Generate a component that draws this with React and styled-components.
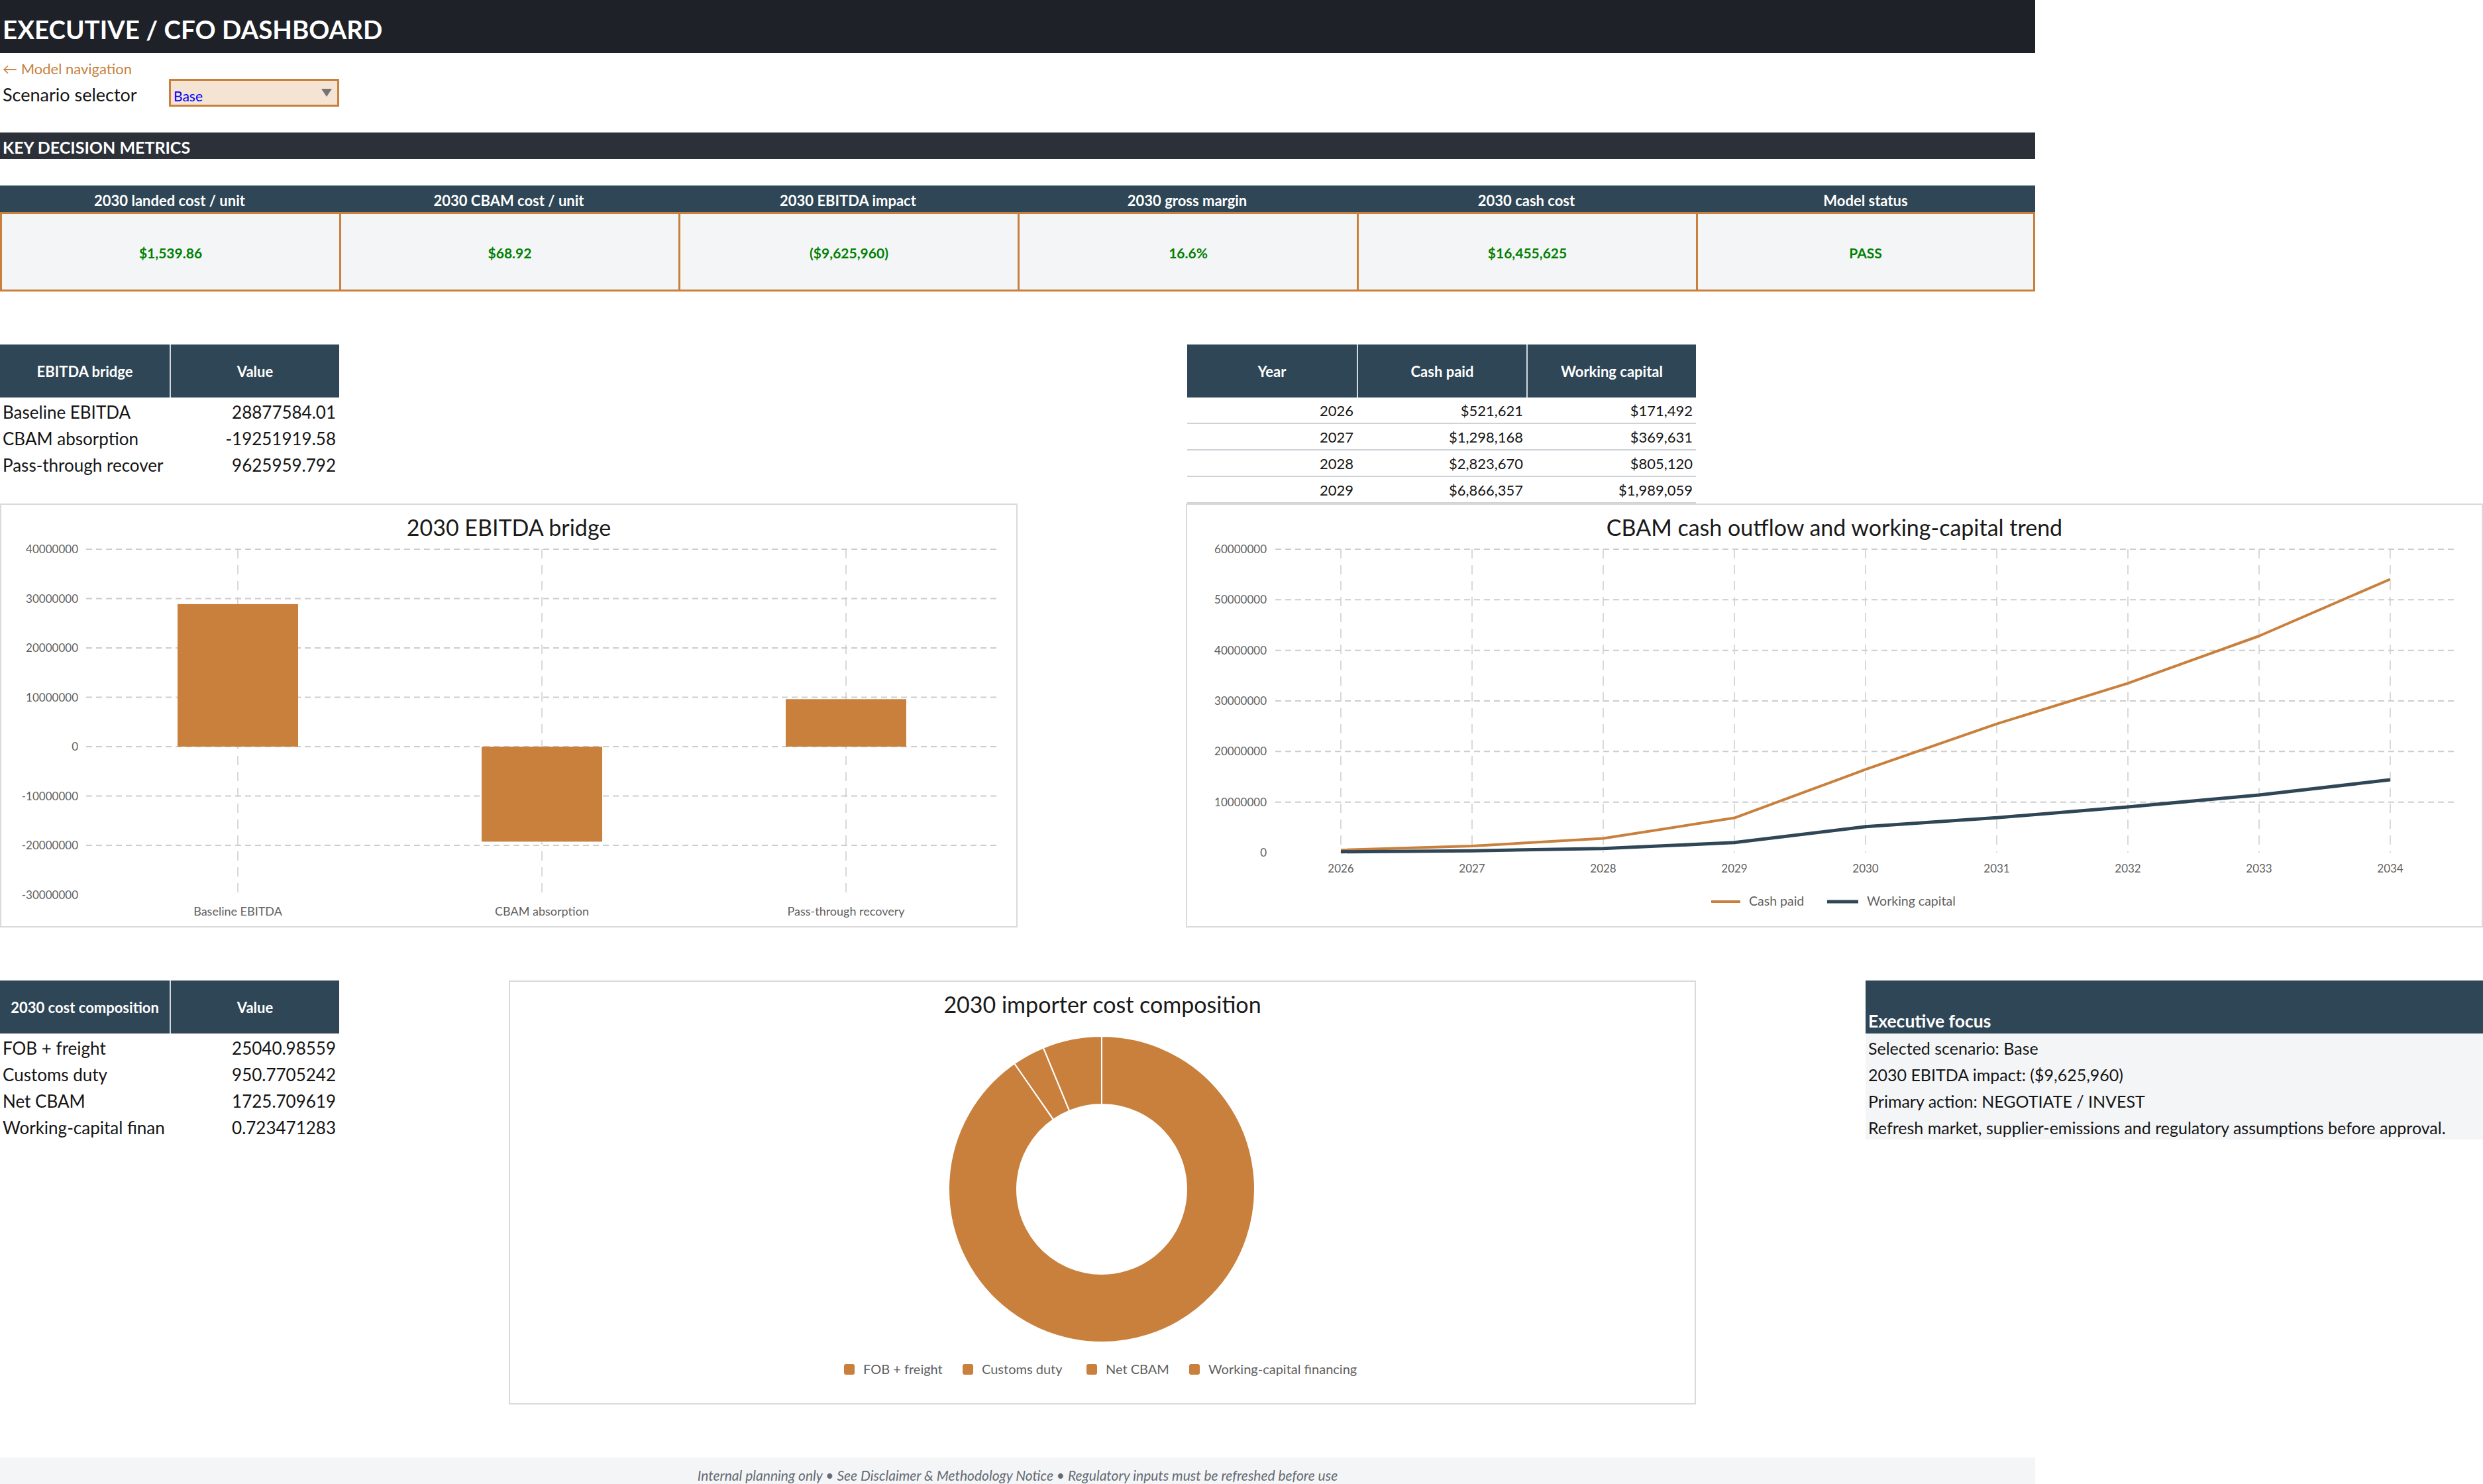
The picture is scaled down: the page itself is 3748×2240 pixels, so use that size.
import React from "react";
import styled, { createGlobalStyle } from "styled-components";

const ORANGE = "#c8803c";
const SLATE = "#2f4656";
const PANEL = "#f4f5f7";
const AXIS = "#5f5f5f";
const GRID = "#cdcdcd";

const GlobalStyle = createGlobalStyle`
  html, body {
    margin: 0;
    padding: 0;
    background: #ffffff;
  }
  body {
    width: 3748px;
    height: 2240px;
    overflow: hidden;
    font-family: Lato, "Noto Sans", sans-serif;
    color: #151515;
  }
`;

const metrics = [
  ["2030 landed cost / unit", "$1,539.86"],
  ["2030 CBAM cost / unit", "$68.92"],
  ["2030 EBITDA impact", "($9,625,960)"],
  ["2030 gross margin", "16.6%"],
  ["2030 cash cost", "$16,455,625"],
  ["Model status", "PASS"],
];

// labels are shown as the sheet cuts them at the column edge
const bridgeRows = [
  ["Baseline EBITDA", "28877584.01"],
  ["CBAM absorption", "-19251919.58"],
  ["Pass-through recover", "9625959.792"],
];

const yearRows = [
  ["2026", "$521,621", "$171,492"],
  ["2027", "$1,298,168", "$369,631"],
  ["2028", "$2,823,670", "$805,120"],
  ["2029", "$6,866,357", "$1,989,059"],
];

const costRows = [
  ["FOB + freight", "25040.98559"],
  ["Customs duty", "950.7705242"],
  ["Net CBAM", "1725.709619"],
  ["Working-capital finan", "0.723471283"],
];

const costLegend = ["FOB + freight", "Customs duty", "Net CBAM", "Working-capital financing"];

const focusLines = [
  "Selected scenario: Base",
  "2030 EBITDA impact: ($9,625,960)",
  "Primary action: NEGOTIATE / INVEST",
  "Refresh market, supplier-emissions and regulatory assumptions before approval.",
];

const years = [2026, 2027, 2028, 2029, 2030, 2031, 2032, 2033, 2034];
const cashPaid = [521621, 1298168, 2823670, 6866357, 16455625, 25460000, 33500000, 42840000, 54070000];
const workingCap = [171492, 369631, 805120, 1989059, 5130000, 6900000, 9040000, 11400000, 14400000];

/* ---------- page frame ---------- */

const Page = styled.div`
  width: 3748px;
  height: 2240px;
  display: flex;
  flex-direction: column;
`;

const TitleBar = styled.h1`
  margin: 0;
  width: 3072px;
  height: 80px;
  box-sizing: border-box;
  padding: 8px 4px 0;
  background: #1e2127;
  color: #ffffff;
  font-size: 38.5px;
  font-weight: 700;
  line-height: 72px;
  white-space: nowrap;
`;

const NavLink = styled.a`
  height: 40px;
  display: flex;
  align-items: flex-end;
  padding: 0 0 3px 4px;
  box-sizing: border-box;
  color: ${ORANGE};
  font-size: 22px;
  text-decoration: none;
`;

const ScenarioRow = styled.div`
  height: 40px;
  display: grid;
  grid-template-columns: 255px 257px;
`;

const ScenarioLabel = styled.div`
  font-size: 27px;
  line-height: 40px;
  padding-left: 4px;
  padding-top: 3px;
  box-sizing: border-box;
  white-space: nowrap;
`;

const Dropdown = styled.div`
  margin-top: -1px;
  height: 42px;
  box-sizing: border-box;
  border: 3px solid ${ORANGE};
  background: #f5e4d3;
  display: flex;
  align-items: center;
  justify-content: space-between;
  padding: 0 8px 0 4px;
`;

const DropdownValue = styled.span`
  margin-top: 8px;
  color: #0000ff;
  font-size: 21px;
  line-height: 1;
`;

const DropdownCaret = styled.span`
  width: 0;
  height: 0;
  border-left: 8px solid transparent;
  border-right: 8px solid transparent;
  border-top: 12px solid #747474;
`;

const Spacer = styled.div`
  height: ${(p) => p.$h}px;
  flex: none;
`;

const SectionBar = styled.h2`
  margin: 0;
  width: 3072px;
  height: 40px;
  box-sizing: border-box;
  padding: 4px 4px 0;
  background: #2b3039;
  color: #ffffff;
  font-size: 25px;
  font-weight: 700;
  line-height: 36px;
`;

/* ---------- KPI strip ---------- */

const KpiGrid = styled.div`
  width: 3072px;
  display: grid;
  grid-template-columns: repeat(6, 512px);
`;

const KpiHead = styled.div`
  height: 40px;
  box-sizing: border-box;
  background: ${SLATE};
  color: #ffffff;
  font-size: 22px;
  font-weight: 700;
  text-align: center;
  line-height: 40px;
  padding-top: 3px;
`;

const KpiValue = styled.div`
  height: 120px;
  box-sizing: border-box;
  background: ${PANEL};
  border-top: 3px solid ${ORANGE};
  border-bottom: 3px solid ${ORANGE};
  border-left: 3px solid ${ORANGE};
  border-right: ${(p) => (p.$last ? `3px solid ${ORANGE}` : "none")};
  color: #008000;
  font-size: 21px;
  font-weight: 700;
  display: flex;
  align-items: center;
  justify-content: center;
  padding-top: 2px;
`;

/* ---------- bands ---------- */

const Band = styled.div`
  height: ${(p) => p.$h}px;
  display: grid;
  grid-template-columns: ${(p) => p.$cols};
  align-items: start;
  flex: none;
`;

const Table = styled.div`
  display: grid;
  grid-template-columns: ${(p) => p.$cols};
  grid-column: ${(p) => p.$col || "auto"};
`;

const HeadCell = styled.div`
  height: 80px;
  box-sizing: border-box;
  background: ${SLATE};
  color: #ffffff;
  font-size: 22px;
  font-weight: 700;
  display: flex;
  align-items: center;
  justify-content: center;
  border-left: ${(p) => (p.$first ? "none" : "2px solid #d3d9de")};
  white-space: nowrap;
`;

const BodyCell = styled.div`
  height: 40px;
  box-sizing: border-box;
  padding: ${(p) => p.$shift}px 5px 0 4px;
  font-size: ${(p) => p.$size}px;
  line-height: 40px;
  text-align: ${(p) => p.$align};
  white-space: nowrap;
  color: #151515;
  border-bottom: ${(p) => (p.$ruled ? "2px solid #cfd3d8" : "none")};
`;

const ChartCard = styled.div`
  grid-column: ${(p) => p.$col || "auto"};
  width: ${(p) => p.$w}px;
  height: ${(p) => p.$h}px;
  box-sizing: border-box;
  border: 2px solid #dadada;
  background: #ffffff;
  svg {
    display: block;
  }
`;

const Focus = styled.div`
  grid-column: ${(p) => p.$col};
  display: flex;
  flex-direction: column;
`;

const FocusHead = styled.div`
  height: 80px;
  box-sizing: border-box;
  background: ${SLATE};
  color: #ffffff;
  font-size: 26.5px;
  font-weight: 700;
  display: flex;
  align-items: flex-end;
  padding: 0 0 3px 4px;
`;

const FocusLine = styled.div`
  height: 40px;
  box-sizing: border-box;
  background: ${PANEL};
  font-size: 25px;
  line-height: 40px;
  padding: 2px 0 0 4px;
  white-space: nowrap;
`;

const Footer = styled.footer`
  width: 3072px;
  height: 40px;
  box-sizing: border-box;
  padding-top: 5px;
  background: ${PANEL};
  color: #646b73;
  font-size: 21px;
  font-style: italic;
  text-align: center;
  line-height: 44px;
  flex: none;
  overflow: hidden;
`;

/* ---------- charts ---------- */

const txt = { fontFamily: "Lato, 'Noto Sans', sans-serif" };

function BridgeChart() {
  const zero = 367;
  const step = 74.5;
  const y = (v) => zero - (v / 1e7) * step;
  const ticks = [4e7, 3e7, 2e7, 1e7, 0, -1e7, -2e7, -3e7];
  const centers = [359, 818, 1277];
  const labels = ["Baseline EBITDA", "CBAM absorption", "Pass-through recovery"];
  const values = [28877584.01, -19251919.58, 9625959.792];
  return (
    <ChartCard $w={1536} $h={640}>
      <svg width={1532} height={636} viewBox="2 2 1532 636">
        <text x={768} y={49} textAnchor="middle" fontSize={34} fill="#1a1a1a" style={txt}>
          2030 EBITDA bridge
        </text>
        {ticks.map((t) => (
          <g key={t}>
            {t !== -3e7 && (
              <line x1={130} x2={1506} y1={y(t)} y2={y(t)} stroke={GRID} strokeWidth={2} strokeDasharray="9 6" />
            )}
            <text x={118} y={y(t) + 6} textAnchor="end" fontSize={17} fill={AXIS} style={txt}>
              {String(t)}
            </text>
          </g>
        ))}
        {centers.map((c, i) => (
          <g key={c}>
            <line x1={c} x2={c} y1={69} y2={591} stroke={GRID} strokeWidth={1.5} strokeDasharray="14 10" />
            <rect
              x={c - 91}
              width={182}
              y={Math.min(y(values[i]), zero)}
              height={Math.abs(y(values[i]) - zero)}
              fill={ORANGE}
            />
            <text x={c} y={622} textAnchor="middle" fontSize={18} fill={AXIS} style={txt}>
              {labels[i]}
            </text>
          </g>
        ))}
      </svg>
    </ChartCard>
  );
}

function TrendChart() {
  const y = (v) => 527 - (v / 1e7) * 76.33;
  const x = (i) => 234 + i * 198;
  const ticks = [6e7, 5e7, 4e7, 3e7, 2e7, 1e7, 0];
  const pts = (arr) => arr.map((v, i) => `${x(i)},${y(v)}`).join(" ");
  return (
    <ChartCard $w={1958} $h={640} $col={3}>
      <svg width={1954} height={636} viewBox="2 2 1954 636">
        <text x={979} y={49} textAnchor="middle" fontSize={34} fill="#1a1a1a" style={txt}>
          CBAM cash outflow and working-capital trend
        </text>
        {ticks.map((t) => (
          <g key={t}>
            {t !== 0 && (
              <line x1={135} x2={1917} y1={y(t)} y2={y(t)} stroke={GRID} strokeWidth={2} strokeDasharray="9 6" />
            )}
            <text x={122} y={y(t) + 6} textAnchor="end" fontSize={17} fill={AXIS} style={txt}>
              {String(t)}
            </text>
          </g>
        ))}
        {years.map((yr, i) => (
          <g key={yr}>
            <line x1={x(i)} x2={x(i)} y1={69} y2={527} stroke={GRID} strokeWidth={1.5} strokeDasharray="14 10" />
            <text x={x(i)} y={557} textAnchor="middle" fontSize={17} fill={AXIS} style={txt}>
              {yr}
            </text>
          </g>
        ))}
        <polyline points={pts(cashPaid)} fill="none" stroke={ORANGE} strokeWidth={4} strokeLinejoin="round" />
        <polyline points={pts(workingCap)} fill="none" stroke={SLATE} strokeWidth={5} strokeLinejoin="round" />
        <line x1={793} x2={837} y1={601} y2={601} stroke={ORANGE} strokeWidth={4} />
        <text x={850} y={607} fontSize={19.5} fill={AXIS} style={txt}>
          Cash paid
        </text>
        <line x1={968} x2={1015} y1={601} y2={601} stroke={SLATE} strokeWidth={5} />
        <text x={1028} y={607} fontSize={19.5} fill={AXIS} style={txt}>
          Working capital
        </text>
      </svg>
    </ChartCard>
  );
}

function ringSlice(cx, cy, r0, r1, a0, a1) {
  const p = (a, r) => [cx + r * Math.sin(a), cy - r * Math.cos(a)];
  const large = a1 - a0 > Math.PI ? 1 : 0;
  const [x1, y1] = p(a0, r1);
  const [x2, y2] = p(a1, r1);
  const [x3, y3] = p(a1, r0);
  const [x4, y4] = p(a0, r0);
  return `M${x1},${y1} A${r1},${r1} 0 ${large} 1 ${x2},${y2} L${x3},${y3} A${r0},${r0} 0 ${large} 0 ${x4},${y4} Z`;
}

function CompositionChart() {
  const values = costRows.map((r) => parseFloat(r[1]));
  const total = values.reduce((a, b) => a + b, 0);
  let acc = 0;
  const slices = values.map((v) => {
    const a0 = (acc / total) * Math.PI * 2;
    acc += v;
    const a1 = (acc / total) * Math.PI * 2;
    return ringSlice(895, 315, 128, 231, a0, a1);
  });
  const legendX = [506, 685, 872, 1027];
  return (
    <ChartCard $w={1792} $h={640} $col={3}>
      <svg width={1788} height={636} viewBox="2 2 1788 636">
        <text x={896} y={49} textAnchor="middle" fontSize={34} fill="#1a1a1a" style={txt}>
          2030 importer cost composition
        </text>
        {slices.map((d, i) => (
          <path key={i} d={d} fill={ORANGE} stroke="#ffffff" strokeWidth={2} />
        ))}
        {costLegend.map((label, i) => (
          <g key={label}>
            <rect x={legendX[i]} y={579} width={16} height={16} rx={3} fill={ORANGE} />
            <text x={legendX[i] + 29} y={594} fontSize={20} fill={AXIS} style={txt}>
              {label}
            </text>
          </g>
        ))}
      </svg>
    </ChartCard>
  );
}

export default function App() {
  return (
    <>
      <GlobalStyle />
      <Page>
        <TitleBar>EXECUTIVE / CFO DASHBOARD</TitleBar>
        <NavLink href="#">← Model navigation</NavLink>
        <ScenarioRow>
          <ScenarioLabel>Scenario selector</ScenarioLabel>
          <Dropdown>
            <DropdownValue>Base</DropdownValue>
            <DropdownCaret />
          </Dropdown>
        </ScenarioRow>
        <Spacer $h={40} />
        <SectionBar>KEY DECISION METRICS</SectionBar>
        <Spacer $h={40} />
        <KpiGrid>
          {metrics.map(([label]) => (
            <KpiHead key={label}>{label}</KpiHead>
          ))}
          {metrics.map(([label, value], i) => (
            <KpiValue key={label} $last={i === metrics.length - 1}>
              {value}
            </KpiValue>
          ))}
        </KpiGrid>
        <Spacer $h={80} />

        <Band $h={240} $cols="512px 1280px 768px">
          <Table $cols="256px 256px">
            <HeadCell $first>EBITDA bridge</HeadCell>
            <HeadCell>Value</HeadCell>
            {bridgeRows.map(([label, value]) => (
              <React.Fragment key={label}>
                <BodyCell $size={26} $shift={2} $align="left">{label}</BodyCell>
                <BodyCell $size={26} $shift={2} $align="right">{value}</BodyCell>
              </React.Fragment>
            ))}
          </Table>
          <Table $cols="256px 256px 256px" $col={3}>
            <HeadCell $first>Year</HeadCell>
            <HeadCell>Cash paid</HeadCell>
            <HeadCell>Working capital</HeadCell>
            {yearRows.map((row) =>
              row.map((cell, j) => (
                <BodyCell key={row[0] + j} $size={22} $shift={0} $align="right" $ruled>
                  {cell}
                </BodyCell>
              ))
            )}
          </Table>
        </Band>

        <Band $h={640} $cols="1536px 254px 1958px">
          <BridgeChart />
          <TrendChart />
        </Band>

        <Spacer $h={80} />

        <Band $h={640} $cols="512px 256px 1792px 256px 932px">
          <Table $cols="256px 256px">
            <HeadCell $first>2030 cost composition</HeadCell>
            <HeadCell>Value</HeadCell>
            {costRows.map(([label, value]) => (
              <React.Fragment key={label}>
                <BodyCell $size={26} $shift={2} $align="left">{label}</BodyCell>
                <BodyCell $size={26} $shift={2} $align="right">{value}</BodyCell>
              </React.Fragment>
            ))}
          </Table>
          <CompositionChart />
          <Focus $col={5}>
            <FocusHead>Executive focus</FocusHead>
            {focusLines.map((line) => (
              <FocusLine key={line}>{line}</FocusLine>
            ))}
          </Focus>
        </Band>

        <Spacer $h={80} />
        <Footer>
          Internal planning only • See Disclaimer &amp; Methodology Notice • Regulatory inputs must be refreshed before use
        </Footer>
      </Page>
    </>
  );
}
